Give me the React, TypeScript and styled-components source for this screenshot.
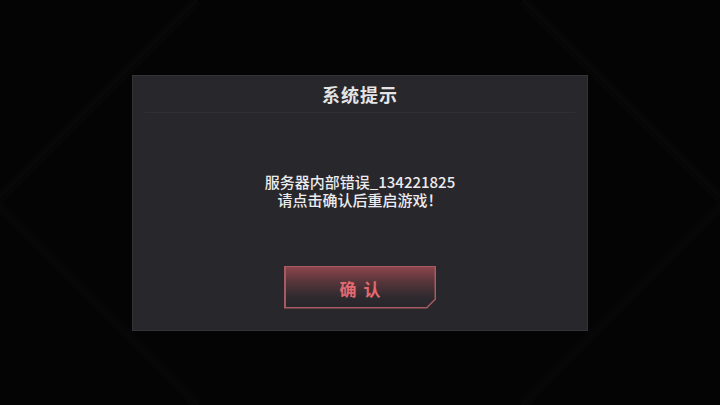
import React from "react";
import styled, { createGlobalStyle } from "styled-components";

const Global = createGlobalStyle`
  html, body { margin: 0; padding: 0; background: #040405; }
  #root { width: 720px; height: 405px; }
`;

const Screen = styled.div`
  position: relative;
  width: 720px;
  height: 405px;
  overflow: hidden;
  background: #040405;
  display: flex;
  align-items: center;
  justify-content: center;
  font-family: "Noto Sans CJK SC", "Noto Sans", sans-serif;
`;

const Backdrop = styled.svg`
  position: absolute;
  inset: 0;
  width: 720px;
  height: 405px;
`;

const Panel = styled.div`
  position: relative;
  width: 456px;
  height: 256px;
  box-sizing: border-box;
  background: #28272c;
  border: 1px solid #333237;
  display: flex;
  flex-direction: column;
  align-items: center;
`;

const Header = styled.div`
  height: 36px;
  width: 100%;
  display: flex;
  align-items: center;
  justify-content: center;
  color: #e4e4e6;
  font-size: 18px;
  font-weight: 700;
  letter-spacing: 1px;
`;

const Divider = styled.div`
  height: 1px;
  align-self: stretch;
  margin: 0 12px;
  background: #302f34;
`;

const Message = styled.div`
  margin-top: 60px;
  color: #ececee;
  font-size: 15px;
  font-weight: 500;
  line-height: 18px;
  text-align: center;
`;

const ButtonFrame = styled.button`
  margin-top: 57px;
  width: 152px;
  height: 43px;
  padding: 1.5px;
  border: none;
  background: #a85a62;
  clip-path: polygon(0 0, 100% 0, 100% calc(100% - 9px), calc(100% - 9px) 100%, 0 100%);
  cursor: pointer;
  display: flex;
`;

const ButtonFace = styled.span`
  flex: 1;
  display: flex;
  align-items: center;
  justify-content: center;
  background: linear-gradient(180deg, #8c454c 0%, #5a363b 35%, #2e2a2e 75%, #28272b 100%);
  clip-path: polygon(0 0, 100% 0, 100% calc(100% - 8px), calc(100% - 8px) 100%, 0 100%);
  color: #e26a70;
  font-family: "Noto Sans CJK SC", sans-serif;
  font-size: 17px;
  font-weight: 700;
  letter-spacing: 7px;
  padding-left: 7px;
  padding-top: 2px;
`;

export default function App() {
  return (
    <>
      <Global />
      <Screen>
        <Backdrop viewBox="0 0 720 405">
          <g fill="none" strokeWidth="12" stroke="#060607">
            <path d="M197 0 L-10 207 M523 0 L730 207 M-10 197 L198 405 M730 197 L522 405" />
          </g>
          <g fill="none" strokeWidth="1.5" stroke="#0a0a0c">
            <path d="M197 0 L-10 207 M523 0 L730 207 M-10 197 L198 405 M730 197 L522 405" />
          </g>
        </Backdrop>
        <Panel>
          <Header>系统提示</Header>
          <Divider />
          <Message>
            服务器内部错误_134221825
            <br />
            请点击确认后重启游戏！
          </Message>
          <ButtonFrame>
            <ButtonFace>确认</ButtonFace>
          </ButtonFrame>
        </Panel>
      </Screen>
    </>
  );
}
